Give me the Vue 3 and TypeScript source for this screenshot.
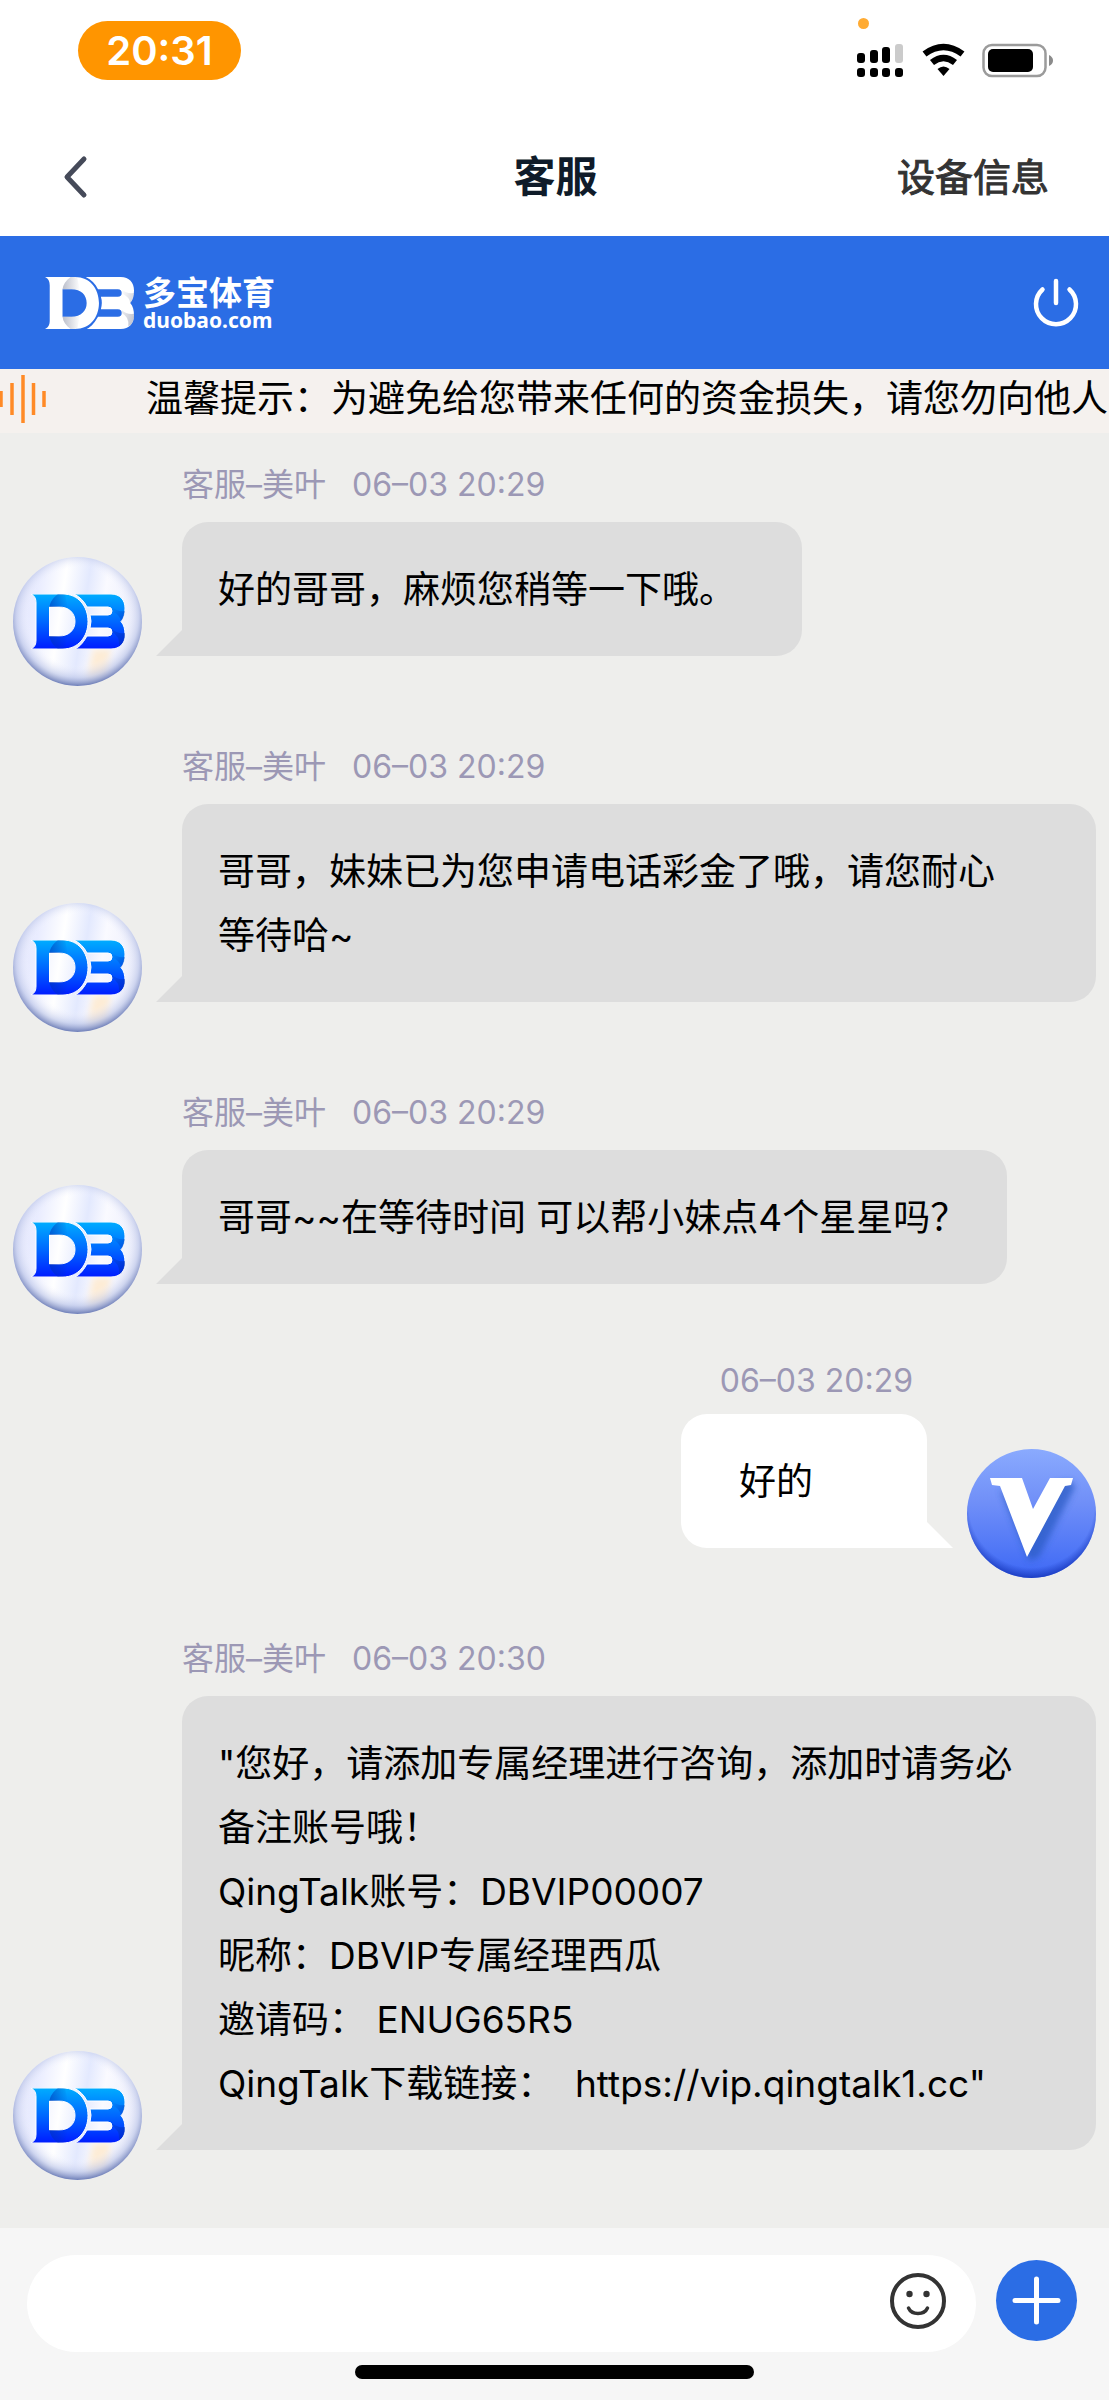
<script setup lang="ts">
import { ref } from 'vue'

interface Line {
  text: string
  link?: string
  tail?: string
}

interface Message {
  id: number
  own: boolean
  compact?: boolean
  sender?: string
  time: string
  lines: Line[]
}

const draft = ref('')

const messages: Message[] = [
  {
    id: 1,
    own: false,
    sender: '客服–美叶',
    time: '06–03 20:29',
    lines: [{ text: '好的哥哥，麻烦您稍等一下哦。' }],
  },
  {
    id: 2,
    own: false,
    sender: '客服–美叶',
    time: '06–03 20:29',
    lines: [{ text: '哥哥，妹妹已为您申请电话彩金了哦，请您耐心等待哈~' }],
  },
  {
    id: 3,
    own: false,
    compact: true,
    sender: '客服–美叶',
    time: '06–03 20:29',
    lines: [{ text: '哥哥~~在等待时间 可以帮小妹点4个星星吗？' }],
  },
  { id: 4, own: true, time: '06–03 20:29', lines: [{ text: '好的' }] },
  {
    id: 5,
    own: false,
    sender: '客服–美叶',
    time: '06–03 20:30',
    lines: [
      { text: '"您好，请添加专属经理进行咨询，添加时请务必备注账号哦！' },
      { text: 'QingTalk账号：DBVIP00007' },
      { text: '昵称：DBVIP专属经理西瓜' },
      { text: '邀请码： ENUG65R5' },
      { text: 'QingTalk下载链接：  ', link: 'https://vip.qingtalk1.cc', tail: '"' },
    ],
  },
]
</script>

<template>
  <div class="screen">
    <svg class="defs" width="0" height="0" aria-hidden="true">
      <defs>
        <linearGradient id="ink" x1="0" y1="0" x2="0" y2="1">
          <stop offset="0" stop-color="#00adff" />
          <stop offset="0.5" stop-color="#0068ff" />
          <stop offset="1" stop-color="#001cff" />
        </linearGradient>
        <linearGradient id="foldDark" x1="0" y1="0" x2="1" y2="0">
          <stop offset="0" stop-color="#0030b0" stop-opacity="0.55" />
          <stop offset="1" stop-color="#0030b0" stop-opacity="0" />
        </linearGradient>
        <linearGradient id="foldEdge" x1="0" y1="0" x2="1" y2="1">
          <stop offset="0" stop-color="#0030b0" stop-opacity="0" />
          <stop offset="1" stop-color="#0030b0" stop-opacity="0.6" />
        </linearGradient>
        <linearGradient id="foldGrey" x1="0" y1="0" x2="1" y2="0">
          <stop offset="0" stop-color="#8d93a8" stop-opacity="0.6" />
          <stop offset="1" stop-color="#8d93a8" stop-opacity="0" />
        </linearGradient>
        <linearGradient id="foldGreyEdge" x1="0" y1="0" x2="1" y2="1">
          <stop offset="0" stop-color="#8d93a8" stop-opacity="0" />
          <stop offset="1" stop-color="#8d93a8" stop-opacity="0.6" />
        </linearGradient>
        <radialGradient id="pearl" cx="0.5" cy="0.46" r="0.55">
          <stop offset="0" stop-color="#ffffff" stop-opacity="0" />
          <stop offset="0.68" stop-color="#f4f5ff" stop-opacity="0" />
          <stop offset="0.86" stop-color="#b9c3e6" stop-opacity="0.6" />
          <stop offset="1" stop-color="#5a6cab" />
        </radialGradient>
        <linearGradient id="sheen" x1="0" y1="0" x2="1" y2="0.15">
          <stop offset="0" stop-color="#e2e5fb" />
          <stop offset="0.22" stop-color="#e9ecff" />
          <stop offset="0.42" stop-color="#ffffff" />
          <stop offset="0.6" stop-color="#e3e9fe" />
          <stop offset="0.74" stop-color="#fafaff" />
          <stop offset="1" stop-color="#eceefc" />
        </linearGradient>
        <linearGradient id="vip" x1="0" y1="0" x2="0" y2="1">
          <stop offset="0" stop-color="#8aaafe" />
          <stop offset="0.4" stop-color="#7190f8" />
          <stop offset="1" stop-color="#3d68f5" />
        </linearGradient>
        <radialGradient id="vipRim" cx="0.5" cy="0.43" r="0.58">
          <stop offset="0.84" stop-color="#1c3dc0" stop-opacity="0" />
          <stop offset="1" stop-color="#1635b8" stop-opacity="0.95" />
        </radialGradient>
        <filter id="soft" x="-20%" y="-20%" width="140%" height="140%">
          <feGaussianBlur stdDeviation="3" />
        </filter>
        <symbol id="mark" viewBox="0 0 94 55" preserveAspectRatio="none">
          <path
            fill-rule="evenodd"
            d="M0 0H32C47 0 57 12 57 27.500S47 55 32 55H0C4 53 5 50 5 46V9C5 5 4 2 0 0ZM18.500 13V42H28C38 42 44 36 44 27.500S38 13 28 13Z"
          />
          <path
            d="M43 0H80C89 0 94 6 94 14C94 20 93 24 90 27.500C93 31 94 35 94 41C94 49 89 55 80 55H44C50 52 53 47 56 42H77Q81 42 81 38T77 34H59Q61 27 59 21H77Q81 21 81 17T77 13H56C53 7 49 3 43 0Z"
          />
        </symbol>
        <symbol id="folds" viewBox="0 0 94 55" preserveAspectRatio="none">
          <path class="fold-side" d="M18.500 13C19 8 22 4 27 0H34L37 14Q33 13 28 13ZM18.500 42C19 47 22 51 27 55H34L37 41Q33 42 28 42Z" />
          <path class="fold-edge" d="M81 13Q86 18 94 17Q93 24 90 27.500Q90 22 81 17ZM81 35Q86 40 94 39V43Q92 51 88 52Q89 42 81 38Z" />
        </symbol>
      </defs>
    </svg>

    <div class="status">
      <span class="clock">20:31</span>
      <svg class="indicators" width="198" height="64" viewBox="0 0 198 64" aria-hidden="true">
        <circle cx="7.500" cy="5.500" r="5.500" fill="#ffab33" />
        <g fill="#000">
          <rect x="1" y="35" width="8" height="10" rx="3" />
          <rect x="14" y="32" width="8" height="13" rx="3" />
          <rect x="26" y="29" width="8" height="16" rx="3" />
          <rect x="39" y="26" width="8" height="19" rx="3" fill="#cbcbcb" />
          <rect x="1" y="50" width="8" height="9" rx="3" />
          <rect x="14" y="50" width="8" height="9" rx="3" />
          <rect x="26" y="50" width="8" height="9" rx="3" />
          <rect x="39" y="50" width="8" height="9" rx="3" />
          <path d="M87.500 58L81.500 51Q87.500 46 93.500 51Z" />
        </g>
        <g fill="none" stroke="#000" stroke-width="6.500">
          <path d="M68.500 36Q87.500 22 106.500 36" />
          <path d="M76 44.500Q87.500 35.500 99 44.500" />
        </g>
        <rect x="127.500" y="27" width="62" height="31" rx="8.500" fill="none" stroke="#9b9b9b" stroke-width="2.500" />
        <rect x="132" y="31" width="45" height="23" rx="5" fill="#000" />
        <path d="M193 37Q197 39 197 42.500T193 48Z" fill="#8b8b8b" />
      </svg>
    </div>

    <header class="nav">
      <button class="back" type="button" aria-label="返回">
        <svg width="26" height="44" viewBox="0 0 26 44">
          <path d="M22 4L5 22L22 40" fill="none" stroke="#454a59" stroke-width="5" stroke-linecap="round" stroke-linejoin="round" />
        </svg>
      </button>
      <h1 class="title">客服</h1>
      <button class="device" type="button">设备信息</button>
    </header>

    <div class="brand">
      <div class="logo">
        <svg class="logo-mark" width="89" height="52" viewBox="0 0 94 55" preserveAspectRatio="none" aria-hidden="true">
          <use href="#mark" width="94" height="55" fill="#fff" />
          <use class="folds-grey" href="#folds" width="94" height="55" />
        </svg>
        <div class="logo-words">
          <span class="logo-name">多宝体育</span>
          <span class="logo-site">duobao.com</span>
        </div>
      </div>
      <button class="power" type="button" aria-label="退出">
        <svg width="48" height="52" viewBox="0 0 48 52">
          <g fill="none" stroke="#fff" stroke-width="4.500" stroke-linecap="round">
            <path d="M24 4V26" />
            <path d="M10.500 12.500A20 20 0 1 0 37.500 12.500" />
          </g>
        </svg>
      </button>
    </div>

    <div class="notice">
      <svg class="wave" width="48" height="50" viewBox="0 0 48 50" aria-hidden="true">
        <g stroke="#ff8a26" stroke-width="3.500">
          <path d="M1 17V33M12 9V41M23 1V49M33.500 9V41M44 17V33" />
        </g>
      </svg>
      <p class="notice-text">温馨提示：为避免给您带来任何的资金损失，请您勿向他人</p>
    </div>

    <main class="chat">
      <article v-for="m in messages" :key="m.id" class="message" :class="{ own: m.own, compact: m.compact }">
        <svg v-if="m.own" class="avatar" viewBox="0 0 129 129" aria-hidden="true">
          <circle cx="64.500" cy="64.500" r="64.500" fill="url(#vip)" />
          <circle cx="64.500" cy="64.500" r="64.500" fill="url(#vipRim)" />
          <path d="M33 40L62 112L72 108L108 38L104 32L88 34L68 66Z" fill="#2c5cc4" opacity="0.75" filter="url(#soft)" />
          <path d="M23 29H55L66 60L83 29H106L104 36L98 37L60 108L33 37L25 36Z" fill="#fff" />
        </svg>
        <svg v-else class="avatar" viewBox="0 0 129 129" aria-hidden="true">
          <circle cx="64.500" cy="64.500" r="64.500" fill="url(#sheen)" />
          <path d="M80 92H98L94 118L74 122Z" fill="#fdecd6" filter="url(#soft)" />
          <circle cx="64.500" cy="64.500" r="64.500" fill="url(#pearl)" />
          <use href="#mark" x="18" y="37" width="94" height="55" fill="url(#ink)" stroke="#fff" stroke-width="1" />
          <use class="folds-blue" href="#folds" x="18" y="37" width="94" height="55" />
        </svg>
        <div class="body">
          <div class="meta">
            <span v-if="m.sender">{{ m.sender }}</span>
            <time>{{ m.time }}</time>
          </div>
          <div class="bubble">
            <p v-for="(line, i) in m.lines" :key="i" class="line">{{ line.text }}<a v-if="line.link" :href="line.link">{{ line.link }}</a>{{ line.tail }}</p>
          </div>
        </div>
      </article>
    </main>

    <footer class="composer">
      <div class="row">
        <div class="field">
          <input v-model="draft" type="text" aria-label="输入消息" />
          <button class="emoji" type="button" aria-label="表情">
            <svg width="58" height="58" viewBox="0 0 58 58">
              <circle cx="29" cy="29" r="26" fill="none" stroke="#333" stroke-width="4" />
              <circle cx="20.500" cy="22" r="3.200" fill="#333" />
              <circle cx="37.500" cy="22" r="3.200" fill="#333" />
              <path d="M19.500 36Q22 41.500 29 41.500T38.500 36" fill="none" stroke="#333" stroke-width="3.500" stroke-linecap="round" />
            </svg>
          </button>
        </div>
        <button class="add" type="button" aria-label="更多">
          <svg width="81" height="81" viewBox="0 0 81 81">
            <path d="M40.500 19V62M19 40.500H62" fill="none" stroke="#fff" stroke-width="5" stroke-linecap="round" />
          </svg>
        </button>
      </div>
      <div class="home"></div>
    </footer>
  </div>
</template>

<style>
body {
  margin: 0;
}
</style>

<style scoped>
.screen {
  display: flex;
  flex-direction: column;
  min-height: 100vh;
  overflow: hidden;
  background: #fff;
  color: #000;
  font-family: Inter, "Noto Sans CJK SC", sans-serif;
}

button {
  padding: 0;
  border: 0;
  background: none;
  font: inherit;
  color: inherit;
  cursor: pointer;
}

svg {
  display: block;
}

.defs {
  position: absolute;
}

.status {
  display: flex;
  justify-content: space-between;
  align-items: flex-start;
  box-sizing: border-box;
  height: 118px;
  padding: 18px 55px 0 78px;
}

.clock {
  margin-top: 3px;
  width: 163px;
  border-radius: 30px;
  background: #ff9500;
  color: #fff;
  font-size: 40px;
  font-weight: 600;
  line-height: 59px;
  text-align: center;
}

.nav {
  display: grid;
  grid-template-columns: 1fr auto 1fr;
  align-items: center;
  height: 118px;
  padding: 0 60px 0 62px;
}

.back {
  justify-self: start;
}

.title {
  margin: 0;
  color: #0f1b29;
  font-size: 42px;
  font-weight: 600;
  line-height: 60px;
}

.device {
  justify-self: end;
  color: #333;
  font-size: 38px;
  line-height: 60px;
  -webkit-text-stroke: 1px #333;
}

.brand {
  display: flex;
  justify-content: space-between;
  align-items: center;
  height: 133px;
  padding: 0 29px 0 45px;
  background: #2b6de5;
}

.logo {
  display: flex;
  align-items: center;
  gap: 9px;
}

.logo-words {
  display: flex;
  flex-direction: column;
  color: #fff;
  font-weight: 700;
}

.logo-name {
  font-size: 33px;
  line-height: 34px;
}

.logo-site {
  font-family: "Noto Sans", sans-serif;
  font-size: 21px;
  line-height: 20px;
}

.folds-grey {
  --side: url(#foldGrey);
  --edge: url(#foldGreyEdge);
}

.folds-blue {
  --side: url(#foldDark);
  --edge: url(#foldEdge);
}

.fold-side {
  fill: var(--side);
}

.fold-edge {
  fill: var(--edge);
}

.notice {
  display: flex;
  align-items: flex-start;
  gap: 98px;
  height: 64px;
  overflow: hidden;
  background: #f5f1ee;
}

.wave {
  flex: none;
  margin-top: 5px;
}

.notice-text {
  margin: 0;
  font-size: 37px;
  line-height: 60px;
  white-space: nowrap;
}

.chat {
  flex: 1;
  padding: 32px 13px 47px;
  background: #eeeeec;
}

.message {
  display: flex;
  align-items: flex-end;
  gap: 40px;
}

.message + .message {
  margin-top: 61px;
}

.message.own {
  flex-direction: row-reverse;
}

.message + .message.own {
  margin-top: 47px;
}

.avatar {
  flex: none;
  width: 129px;
  height: 129px;
}

.body {
  display: flex;
  flex-direction: column;
  align-items: flex-start;
  margin-bottom: 30px;
}

.own .body {
  align-items: flex-end;
}

.meta {
  display: flex;
  gap: 26px;
  margin-bottom: 17px;
  color: #9c98b5;
  font-size: 32px;
  line-height: 40px;
}

.own .meta {
  margin: 0 14px 13px;
}

.bubble {
  position: relative;
  padding: 36px 66px 34px 36px;
  border-radius: 26px 26px 26px 0;
  background: #ddd;
  font-size: 37px;
  line-height: 64px;
}

.bubble::before {
  content: "";
  position: absolute;
  bottom: 0;
  right: 100%;
  width: 26px;
  height: 26px;
  background: inherit;
  clip-path: polygon(100% 0, 100% 100%, 0 100%);
}

.compact .bubble {
  padding-right: 40px;
}

.own .bubble {
  padding-right: 114px;
  padding-left: 58px;
  border-radius: 26px 26px 0 26px;
  background: #fff;
}

.own .bubble::before {
  right: auto;
  left: 100%;
  clip-path: polygon(0 0, 100% 100%, 0 100%);
}

.line {
  margin: 0;
  white-space: pre-wrap;
}

.line a {
  color: inherit;
  text-decoration: none;
}

.composer {
  padding: 27px 0 21px;
  background: #f6f6f6;
}

.row {
  display: flex;
  align-items: center;
  gap: 20px;
  padding: 0 32px 0 27px;
}

.field {
  display: flex;
  flex: 1;
  align-items: center;
  height: 97px;
  padding: 0 29px 0 40px;
  border-radius: 49px;
  background: #fff;
}

.field input {
  flex: 1;
  min-width: 0;
  border: 0;
  outline: 0;
  background: transparent;
  font: inherit;
  font-size: 37px;
}

.emoji,
.add {
  margin-bottom: 6px;
}

.add {
  width: 81px;
  height: 81px;
  border-radius: 50%;
  background: #2b6de5;
}

.home {
  width: 36%;
  height: 14px;
  margin: 13px auto 0;
  border-radius: 7px;
  background: #000;
}
</style>
